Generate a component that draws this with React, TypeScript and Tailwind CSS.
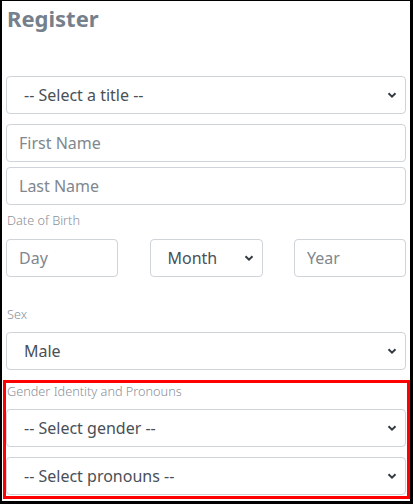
import React from "react";

const font = { fontFamily: '"Noto Sans", "Open Sans", sans-serif' };

function Chevron() {
  return (
    <svg
      className="pointer-events-none absolute right-[8px] top-1/2 -translate-y-1/2"
      width="10"
      height="8"
      viewBox="0 0 10 8"
    >
      <path d="M1.5 2.2 L5 5.6 L8.5 2.2" fill="none" stroke="#343a40" strokeWidth="2" />
    </svg>
  );
}

function Select({ value, className = "" }: { value: string; className?: string }) {
  return (
    <div className={"relative h-[38px] rounded-[4px] border border-[#ced4da] bg-white " + className}>
      <div className="flex h-full items-center pl-[17px] text-[16px] text-[#495057]">{value}</div>
      <Chevron />
    </div>
  );
}

function Input({ placeholder, className = "" }: { placeholder: string; className?: string }) {
  return (
    <div className={"flex h-[38px] items-center rounded-[4px] border border-[#ced4da] bg-white pl-[12px] text-[16px] text-[#80878e] " + className}>
      {placeholder}
    </div>
  );
}

export default function App() {
  return (
    <div className="h-[504px] w-[413px] bg-black pb-[3px] pl-[2px] pr-[3px] pt-[1px]" style={font}>
      <div className="h-full w-full bg-white px-[4px]">
        <h1 className="pl-[1px] pt-[2px] text-[22px] font-bold leading-[30px] text-[#75808c]">Register</h1>
        <Select value="-- Select a title --" className="mt-[43px]" />
        <Input placeholder="First Name" className="mt-[10px]" />
        <Input placeholder="Last Name" className="mt-[5px]" />
        <div className="mt-[7px] pl-[1px] text-[12.7px] font-light leading-[16px] text-[#8a9099]">Date of Birth</div>
        <div className="mt-[11px] flex justify-between">
          <Input placeholder="Day" className="w-[112px]" />
          <Select value="Month" className="w-[113px]" />
          <Input placeholder="Year" className="w-[112px]" />
        </div>
        <div className="mt-[29px] pl-[1px] text-[12.7px] font-light leading-[16px] text-[#8a9099]">Sex</div>
        <Select value="Male" className="mt-[10px]" />
        <div className="relative mt-[10px]">
          <div className="pointer-events-none absolute -left-[3px] -right-[4px] -top-[0px] -bottom-[4px] z-10 border-[3px] border-[#ff0000]" />
          <div className="pl-[1px] pt-[3px] text-[12.7px] font-light leading-[16px] text-[#8a9099]">Gender Identity and Pronouns</div>
          <Select value="-- Select gender --" className="mt-[10px]" />
          <Select value="-- Select pronouns --" className="mt-[10px]" />
        </div>
      </div>
    </div>
  );
}
